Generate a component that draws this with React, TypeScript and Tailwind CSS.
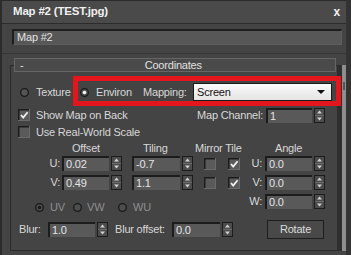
function Spinner() {
  return (
    <svg width="11" height="15" viewBox="0 0 11 15" className="shrink-0">
      <rect x="0.5" y="0.5" width="10" height="14" fill="#4c4c4c" stroke="#1c1c1c" />
      <line x1="1" y1="7.5" x2="10" y2="7.5" stroke="#6a6a6a" />
      <path d="M3 5.5 L5.5 2.5 L8 5.5 Z" fill="#d2d2d2" />
      <path d="M3 9.5 L8 9.5 L5.5 12.5 Z" fill="#d2d2d2" />
    </svg>
  );
}

function Check({ on = false }: { on?: boolean }) {
  return (
    <svg width="12" height="12" viewBox="0 0 12 12" className="shrink-0">
      <rect x="0" y="0" width="12" height="12" fill="#6a6a6a" />
      <rect x="0" y="0" width="11" height="11" fill="#1c1c1c" />
      <rect x="1.5" y="1.5" width="9.5" height="9.5" fill="#5a5a5a" />
      {on && <path d="M3 6 L5.2 8.6 L9.6 3.2" fill="none" stroke="#f0f0f0" strokeWidth="1.8" />}
    </svg>
  );
}

function Radio({ on = false, dim = false }: { on?: boolean; dim?: boolean }) {
  return (
    <svg width="9" height="9" viewBox="0 0 9 9" className="shrink-0">
      <circle cx="4.5" cy="4.5" r="3.8" fill={dim ? "#4e4e4e" : "#555"} stroke="#1a1a1a" strokeWidth="1.3" />
      {on && <circle cx="4.5" cy="4.5" r="1.8" fill={dim ? "#1c1c1c" : "#f4f4f4"} />}
    </svg>
  );
}

function Field({ w, children }: { w: string; children: React.ReactNode }) {
  return (
    <div
      className={`${w} flex h-[15px] shrink-0 items-center border-t-2 border-l-2 border-t-[#1c1c1c] border-l-[#1c1c1c] bg-[#595959] pl-[2px] text-[#e4e4e4]`}
    >
      {children}
    </div>
  );
}

function SpinRow({ axis, off, tile, ang }: { axis: string; off: string; tile: string; ang: string }) {
  return (
    <div className="flex h-[15px] items-center">
      <span className="w-[49px] shrink-0 text-right">{axis}:</span>
      <div className="ml-[2px]"><Field w="w-[47px]">{off}</Field></div>
      <div className="ml-[2px]"><Spinner /></div>
      <div className="ml-[10px]"><Field w="w-[48px]">{tile}</Field></div>
      <div className="ml-[2px]"><Spinner /></div>
      <div className="ml-[11px]"><Check /></div>
      <div className="ml-[12px]"><Check on /></div>
      <span className="w-[22px] shrink-0 text-right">{axis}:</span>
      <div className="ml-[3px]"><Field w="w-[47px]">{ang}</Field></div>
      <div className="ml-[2px]"><Spinner /></div>
    </div>
  );
}

export default function App() {
  return (
    <div className="relative h-[255px] w-[351px] overflow-hidden border-l-2 border-r-[5px] border-l-[#2c2c2c] border-r-[#333] bg-[#444] font-['Liberation_Sans',Arial,sans-serif] text-[11px] leading-none tracking-[-0.2px] text-[#d8d8d8]">
      {/* Title bar */}
      <div className="flex h-[24px] items-center justify-between border-t border-b border-t-[#2a2a2a] border-b-[#2c2c2c] bg-[#4a4a4a] pl-[11px] pr-[6px] text-[11.5px] font-bold text-[#f0f0f0]">
        <span>Map #2 (TEST.jpg)</span>
        <span className="text-[12px]">x</span>
      </div>

      {/* Name */}
      <div className="ml-[10px] mt-[5px] flex h-[16px] w-[330px] items-center border-t-2 border-l-2 border-r border-b border-t-[#1e1e1e] border-l-[#1e1e1e] border-r-[#5e5e5e] border-b-[#5e5e5e] bg-[#575757] pl-[3px] text-[#e2e2e2]">
        Map #2
      </div>

      {/* Rollout panel */}
      <div className="mt-[8px] border-t border-[#363636]">
        <div className="mt-[11px] flex">
          <div className="ml-[8px] h-[186px] w-[327px] border-t border-l border-b border-[#2a2a2a]">
            <div className="relative -mt-[8px] ml-[3px] flex h-[14px] w-[322px] items-center border border-[#666] bg-[#4a4a4a] text-[#e0e0e0]">
              <span className="pl-[5px]">-</span>
              <span className="flex-1 pr-[12px] text-center">Coordinates</span>
            </div>

            {/* Texture / Environ / Mapping */}
            <div className="mt-[5px] flex h-[30px] items-center">
              <div className="ml-[9px]"><Radio /></div>
              <span className="ml-[7px] w-[44px] shrink-0">Texture</span>
              <Radio on />
              <span className="ml-[7px] w-[47px] shrink-0">Environ</span>
              <span className="w-[50px] shrink-0">Mapping:</span>
              <div className="flex h-[18px] w-[139px] shrink-0 items-center justify-between border border-[#1a1a1a] bg-gradient-to-b from-[#fbfbfb] to-[#e4e4e4] pl-[3px] pr-[6px] text-[#111]">
                <span>Screen</span>
                <svg width="8" height="4" viewBox="0 0 8 4"><path d="M0 0 L8 0 L4 4 Z" fill="#111" /></svg>
              </div>
            </div>

            <div className="mt-[1px] flex h-[14px] items-center">
              <div className="ml-[7px]"><Check on /></div>
              <span className="ml-[6px] w-[161px] shrink-0">Show Map on Back</span>
              <span className="w-[69px] shrink-0">Map Channel:</span>
              <Field w="w-[46px]">1</Field>
              <div className="ml-[2px]"><Spinner /></div>
            </div>

            <div className="mt-[3px] flex h-[14px] items-center">
              <div className="ml-[7px]"><Check /></div>
              <span className="ml-[6px]">Use Real-World Scale</span>
            </div>

            <div className="mt-[2px] flex h-[14px] items-center">
              <span className="ml-[61px] w-[71px] shrink-0">Offset</span>
              <span className="w-[52px] shrink-0">Tiling</span>
              <span className="w-[80px] shrink-0">Mirror Tile</span>
              <span>Angle</span>
            </div>

            <div className="mt-[1px]"><SpinRow axis="U" off="0.02" tile="-0.7" ang="0.0" /></div>
            <div className="mt-[4px]"><SpinRow axis="V" off="0.49" tile="1.1" ang="0.0" /></div>

            <div className="mt-[4px] flex h-[18px]">
              <div className="flex w-[229px] shrink-0 items-center pt-[8px] text-[#8e8e8e]">
                <div className="ml-[24px]"><Radio on dim /></div>
                <span className="ml-[6px] w-[23px] shrink-0">UV</span>
                <Radio dim />
                <span className="ml-[5px] w-[31px] shrink-0">VW</span>
                <Radio dim />
                <span className="ml-[6px]">WU</span>
              </div>
              <div className="flex h-[15px] items-center">
                <span className="w-[22px] shrink-0 text-right">W:</span>
                <div className="ml-[3px]"><Field w="w-[47px]">0.0</Field></div>
                <div className="ml-[2px]"><Spinner /></div>
              </div>
            </div>

            <div className="mt-[8px] flex h-[19px] items-center">
              <span className="ml-[8px] w-[29px] shrink-0">Blur:</span>
              <Field w="w-[47px]">1.0</Field>
              <div className="ml-[2px]"><Spinner /></div>
              <span className="ml-[7px] w-[57px] shrink-0">Blur offset:</span>
              <Field w="w-[48px]">0.0</Field>
              <div className="ml-[2px]"><Spinner /></div>
              <button className="ml-[34px] h-[19px] w-[57px] shrink-0 border border-[#1e1e1e] bg-[#494949] text-[#dcdcdc]">
                Rotate
              </button>
            </div>
          </div>

          {/* Scrollbar */}
          <div className="flex h-[186px] w-[9px] shrink-0">
            <div className="w-[5px] bg-[#2e2e2e]" />
            <div className="flex w-[4px] flex-col items-center bg-[#8e8e8e] pt-[17px]">
              <div className="h-[8px] w-[2px] border-y-[3px] border-[#555] bg-[#555]" />
            </div>
          </div>
        </div>
      </div>

      {/* Highlight annotation */}
      <div className="absolute left-[71px] top-[76px] h-[30px] w-[268px] border-[5px] border-[#e3161d]" />
    </div>
  );
}
